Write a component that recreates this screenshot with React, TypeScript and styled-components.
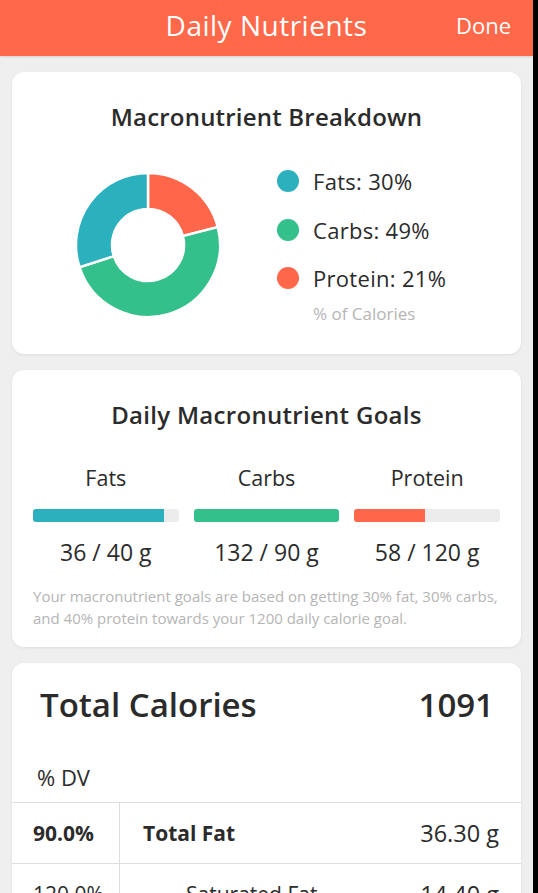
import React from "react";
import styled, { createGlobalStyle } from "styled-components";

const GlobalStyle = createGlobalStyle`
  html, body { margin: 0; padding: 0; background: #000; }
  body { font-family: "Open Sans", "Noto Sans", sans-serif; -webkit-font-smoothing: antialiased; }
  * { box-sizing: border-box; }
`;

const COLORS = {
  fat: "#2bb0bd",
  carb: "#34c08b",
  protein: "#ff664a",
  header: "#ff6849",
  text: "#2b2b2b",
  muted: "#b5b5b5",
  bg: "#efefef",
  track: "#ececec",
  line: "#dedede",
};

const Screen = styled.div`
  width: 533px;
  height: 893px;
  overflow: hidden;
  background: ${COLORS.bg};
  color: ${COLORS.text};
`;

const NavBar = styled.header`
  height: 56px;
  background: ${COLORS.header};
  box-shadow: 0 1px 2px rgba(0, 0, 0, 0.12);
  display: grid;
  grid-template-columns: 1fr auto 1fr;
  align-items: center;
  padding: 0 22px 6px;
  color: #fff;
`;

const NavTitle = styled.h1`
  grid-column: 2;
  margin: 0;
  font-size: 28px;
  font-weight: 400;
  letter-spacing: 0.5px;
`;

const NavButton = styled.button`
  justify-self: end;
  background: none;
  border: 0;
  padding: 0;
  color: #fff;
  font-family: inherit;
  font-size: 22px;
  font-weight: 400;
`;

const Content = styled.main`
  display: flex;
  flex-direction: column;
  gap: 16px;
  padding: 16px 12px;
`;

const Card = styled.section`
  background: #fff;
  border-radius: 12px;
  box-shadow: 0 1px 3px rgba(0, 0, 0, 0.08);
`;

const CardTitle = styled.h2<{ $spacing?: number }>`
  margin: 0;
  text-align: center;
  font-size: 24px;
  line-height: 32px;
  font-weight: 600;
  letter-spacing: ${(p) => p.$spacing ?? 0}px;
  color: ${COLORS.text};
`;

/* ---------- Breakdown card ---------- */

const BreakdownCard = styled(Card)`
  padding: 29px 0 29px;
`;

const BreakdownRow = styled.div`
  display: flex;
  align-items: flex-start;
  gap: 57px;
  padding-left: 64px;
  margin-top: 24px;
`;

const DonutBox = styled.div`
  margin-top: 16px;
  width: 144px;
  height: 144px;
  svg { display: block; }
`;

const Legend = styled.ul`
  list-style: none;
  margin: 0;
  padding: 0;
`;

const LegendItem = styled.li`
  display: flex;
  align-items: center;
  gap: 14px;
  height: 48.5px;
  font-size: 22px;
  letter-spacing: 0.3px;
  color: ${COLORS.text};
`;

const Dot = styled.span<{ $color: string }>`
  width: 22px;
  height: 22px;
  border-radius: 50%;
  background: ${(p) => p.$color};
`;

const LegendNote = styled.div`
  padding-left: 36px;
  font-size: 17px;
  line-height: 22px;
  color: ${COLORS.muted};
`;

/* ---------- Goals card ---------- */

const GoalsCard = styled(Card)`
  padding: 29px 21px 18px;
`;

const GoalsGrid = styled.div`
  display: grid;
  grid-template-columns: repeat(3, 1fr);
  column-gap: 15px;
  margin-top: 33px;
`;

const Goal = styled.div`
  display: flex;
  flex-direction: column;
  align-items: center;
`;

const GoalLabel = styled.div`
  font-size: 21.5px;
  line-height: 28px;
  color: ${COLORS.text};
`;

const Track = styled.div`
  margin-top: 17px;
  align-self: stretch;
  height: 13px;
  border-radius: 3px;
  background: ${COLORS.track};
  overflow: hidden;
`;

const Fill = styled.div<{ $color: string }>`
  height: 100%;
  background: ${(p) => p.$color};
`;

const GoalValue = styled.div`
  margin-top: 15px;
  font-size: 23px;
  line-height: 30px;
  color: ${COLORS.text};
`;

const Footnote = styled.p`
  margin: 18px 0 0;
  font-size: 15px;
  line-height: 22px;
  color: ${COLORS.muted};
`;

/* ---------- Calories card ---------- */

const CaloriesCard = styled(Card)`
  padding-top: 20px;
  border-bottom-left-radius: 0;
  border-bottom-right-radius: 0;
`;

const CaloriesHead = styled.div`
  display: flex;
  justify-content: space-between;
  align-items: center;
  padding: 0 27px 0 28px;
  font-size: 33px;
  line-height: 44px;
  font-weight: 600;
`;

const DvLabel = styled.div`
  margin: 35px 0 10px;
  padding-left: 25px;
  font-size: 22px;
  line-height: 30px;
`;

const NutrientRow = styled.div`
  display: grid;
  grid-template-columns: 108px 1fr;
  height: 61px;
  border-top: 1px solid ${COLORS.line};
`;

const DvCell = styled.div<{ $bold?: boolean }>`
  display: flex;
  align-items: center;
  padding-left: 21px;
  border-right: 1px solid ${COLORS.line};
  font-size: 21px;
  font-weight: ${(p) => (p.$bold ? 700 : 400)};
`;

const NameCell = styled.div<{ $indent?: boolean }>`
  display: flex;
  align-items: center;
  justify-content: space-between;
  padding: 0 22px 0 ${(p) => (p.$indent ? 66 : 23)}px;
`;

const NutrientName = styled.span<{ $bold?: boolean }>`
  font-size: 21px;
  font-weight: ${(p) => (p.$bold ? 700 : 400)};
`;

const NutrientAmount = styled.span`
  font-size: 23.5px;
`;

/* ---------- Donut ---------- */

type Slice = { value: number; color: string };

function arcPath(cx: number, cy: number, r0: number, r1: number, a0: number, a1: number) {
  const pt = (r: number, a: number) => {
    const rad = ((a - 90) * Math.PI) / 180;
    return `${(cx + r * Math.cos(rad)).toFixed(2)} ${(cy + r * Math.sin(rad)).toFixed(2)}`;
  };
  const large = a1 - a0 > 180 ? 1 : 0;
  return [
    `M ${pt(r1, a0)}`,
    `A ${r1} ${r1} 0 ${large} 1 ${pt(r1, a1)}`,
    `L ${pt(r0, a1)}`,
    `A ${r0} ${r0} 0 ${large} 0 ${pt(r0, a0)}`,
    "Z",
  ].join(" ");
}

function Donut({ slices }: { slices: Slice[] }) {
  const total = slices.reduce((s, x) => s + x.value, 0);
  let start = 0;
  return (
    <svg width="144" height="144" viewBox="0 0 144 144">
      {slices.map((s, i) => {
        const sweep = (s.value / total) * 360;
        const d = arcPath(72, 72, 36, 72, start, start + sweep);
        start += sweep;
        return <path key={i} d={d} fill={s.color} stroke="#fff" strokeWidth={2.5} strokeLinejoin="miter" />;
      })}
    </svg>
  );
}

const goals = [
  { label: "Fats", value: 36, goal: 40, color: COLORS.fat },
  { label: "Carbs", value: 132, goal: 90, color: COLORS.carb },
  { label: "Protein", value: 58, goal: 120, color: COLORS.protein },
];

export default function App() {
  return (
    <>
      <GlobalStyle />
      <Screen>
        <NavBar>
          <NavTitle>Daily Nutrients</NavTitle>
          <NavButton>Done</NavButton>
        </NavBar>
        <Content>
          <BreakdownCard>
            <CardTitle $spacing={0.2}>Macronutrient Breakdown</CardTitle>
            <BreakdownRow>
              <DonutBox>
                <Donut
                  slices={[
                    { value: 21, color: COLORS.protein },
                    { value: 49, color: COLORS.carb },
                    { value: 30, color: COLORS.fat },
                  ]}
                />
              </DonutBox>
              <Legend>
                <LegendItem>
                  <Dot $color={COLORS.fat} />
                  Fats: 30%
                </LegendItem>
                <LegendItem>
                  <Dot $color={COLORS.carb} />
                  Carbs: 49%
                </LegendItem>
                <LegendItem>
                  <Dot $color={COLORS.protein} />
                  Protein: 21%
                </LegendItem>
                <LegendNote>% of Calories</LegendNote>
              </Legend>
            </BreakdownRow>
          </BreakdownCard>

          <GoalsCard>
            <CardTitle $spacing={0.3}>Daily Macronutrient Goals</CardTitle>
            <GoalsGrid>
              {goals.map((g) => (
                <Goal key={g.label}>
                  <GoalLabel>{g.label}</GoalLabel>
                  <Track>
                    <Fill $color={g.color} style={{ width: `${Math.min(100, (g.value / g.goal) * 100)}%` }} />
                  </Track>
                  <GoalValue>
                    {g.value} / {g.goal} g
                  </GoalValue>
                </Goal>
              ))}
            </GoalsGrid>
            <Footnote>
              Your macronutrient goals are based on getting 30% fat, 30% carbs,
              <br />
              and 40% protein towards your 1200 daily calorie goal.
            </Footnote>
          </GoalsCard>

          <CaloriesCard>
            <CaloriesHead>
              <span>Total Calories</span>
              <span>1091</span>
            </CaloriesHead>
            <DvLabel>% DV</DvLabel>
            <NutrientRow>
              <DvCell $bold>90.0%</DvCell>
              <NameCell>
                <NutrientName $bold>Total Fat</NutrientName>
                <NutrientAmount>36.30 g</NutrientAmount>
              </NameCell>
            </NutrientRow>
            <NutrientRow>
              <DvCell>120.0%</DvCell>
              <NameCell $indent>
                <NutrientName>Saturated Fat</NutrientName>
                <NutrientAmount>14.40 g</NutrientAmount>
              </NameCell>
            </NutrientRow>
          </CaloriesCard>
        </Content>
      </Screen>
    </>
  );
}
